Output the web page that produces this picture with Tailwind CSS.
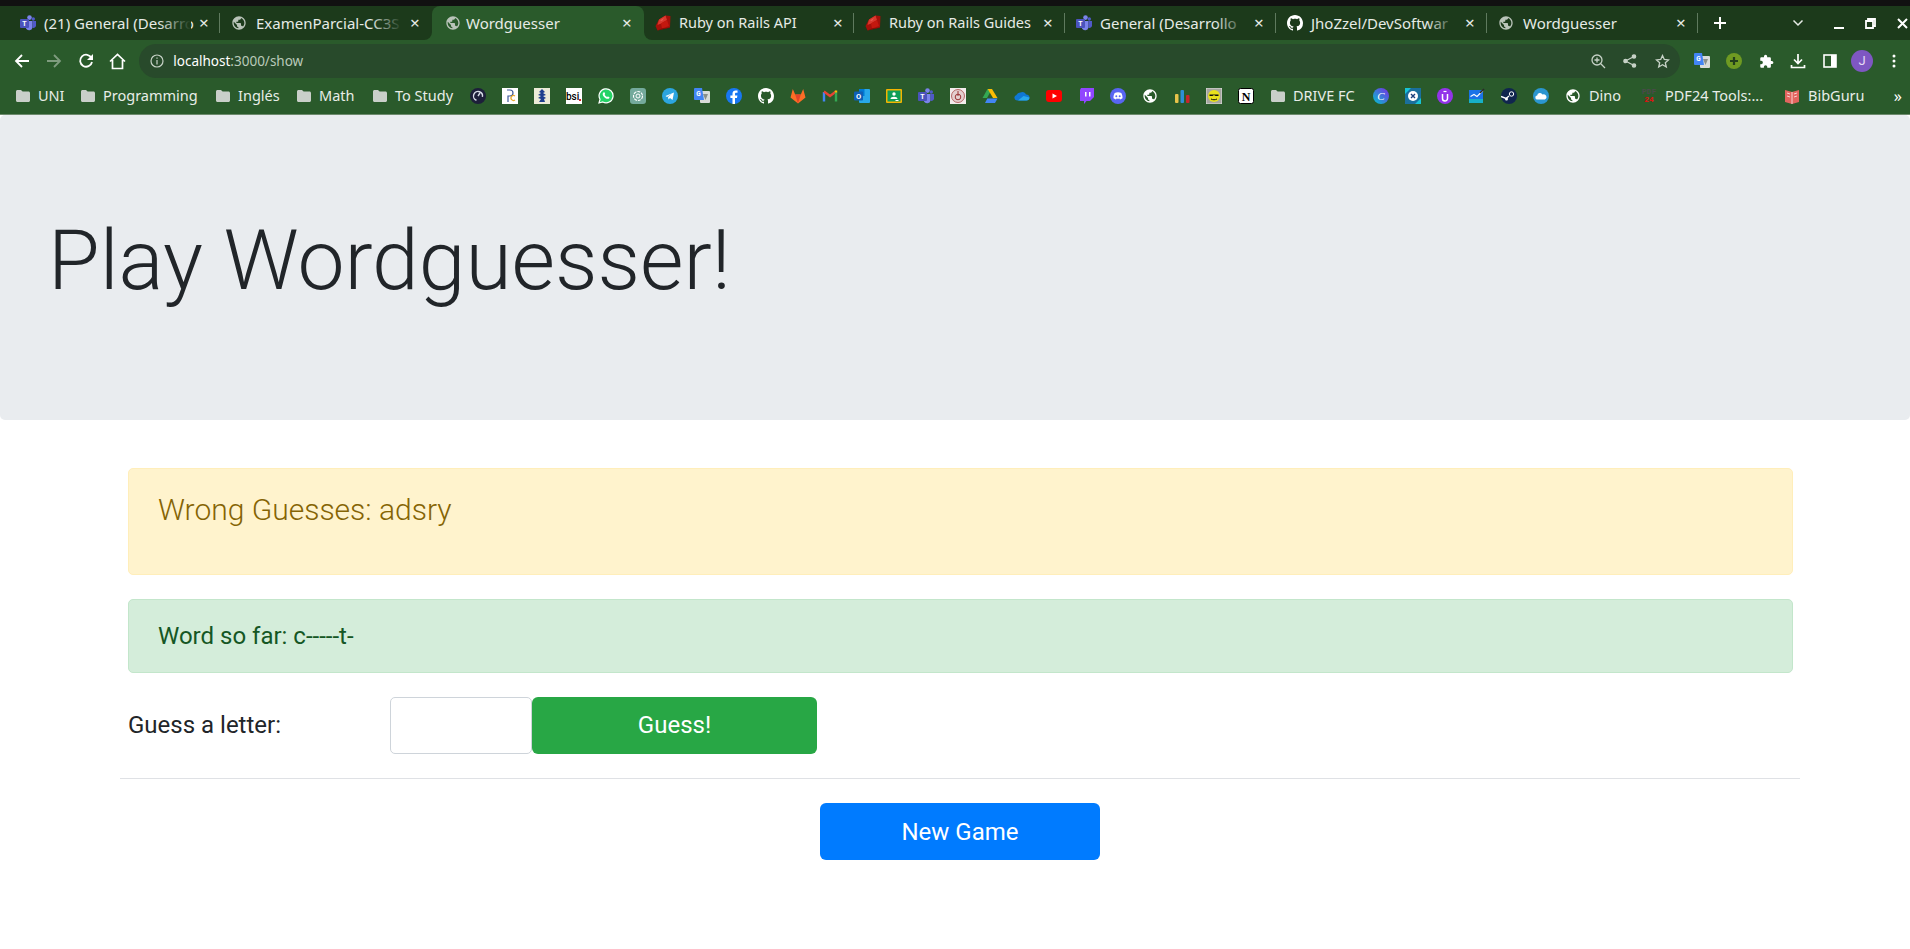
<!DOCTYPE html>
<html lang="en">
<head>
    <meta charset="UTF-8">
    <title>Wordguesser</title>
    <script src="https://cdn.jsdelivr.net/npm/@tailwindcss/browser@4"></script>
</head>
<body class="bg-white font-['Roboto',sans-serif] overflow-hidden h-[949px]">
    <!-- Icon sprites -->
    <svg class="hidden">
        <symbol id="globe" viewBox="0 0 24 24"><path fill="currentColor" d="M12 2C6.48 2 2 6.48 2 12s4.48 10 10 10 10-4.48 10-10S17.52 2 12 2zm-1 17.93c-3.95-.49-7-3.85-7-7.93 0-.62.08-1.21.21-1.79L9 15v1c0 1.1.9 2 2 2v1.93zm6.9-2.54c-.26-.81-1-1.39-1.9-1.39h-1v-3c0-.55-.45-1-1-1H8v-2h2c.55 0 1-.45 1-1V7h2c1.1 0 2-.9 2-2v-.41c2.93 1.19 5 4.06 5 7.41 0 2.08-.8 3.97-2.1 5.39z"/></symbol>
        <symbol id="folder" viewBox="0 0 16 16"><path fill="#c9cfc9" d="M1 3.5C1 2.7 1.7 2 2.5 2H6l1.6 1.6h5.9c.8 0 1.5.7 1.5 1.5v7.4c0 .8-.7 1.5-1.500 1.500h-11C1.700 14 1 13.300 1 12.500z"/></symbol>
        <symbol id="teams" viewBox="0 0 16 16"><circle cx="9.500" cy="2.600" r="2.300" fill="#7b83eb"/><circle cx="13.300" cy="4" r="1.700" fill="#5059c9"/><path fill="#7b83eb" d="M6 6h6.500v6.500a3.500 3.500 0 0 1-6.500 1z"/><path fill="#5059c9" d="M12.500 6H16v4.500a2.500 2.500 0 0 1-3.500 2.200z"/><rect x="0" y="4" width="9" height="9" rx="1" fill="#4b53bc"/><text x="4.500" y="11" font-size="7" font-weight="700" fill="#fff" text-anchor="middle" font-family="Roboto">T</text></symbol>
        <symbol id="ruby" viewBox="0 0 16 16"><path fill="#a5100a" d="M10.500.5L15.500 1l-.5 11.500L2.500 15.500.5 11 4 4.500z"/><path fill="#d9372c" d="M4 4.500L10.500.5 12 5 6 8.500 2.500 10z"/><path fill="#e85a50" d="M5 5.500L9 3 7 6z"/><path fill="#c4180f" d="M6 8.500L12 5l2 6-7 2.500z"/><path fill="#7a0b06" d="M2.500 15.500L7 13.500l8-1z"/></symbol>
        <symbol id="github" viewBox="0 0 16 16"><path fill="#fff" d="M8 0C3.580 0 0 3.580 0 8c0 3.540 2.290 6.530 5.470 7.590.4.070.55-.17.55-.38 0-.19-.01-.82-.01-1.490-2.010.37-2.530-.49-2.690-.94-.09-.23-.48-.94-.82-1.130-.28-.15-.68-.52-.01-.53.63-.01 1.080.58 1.230.82.72 1.210 1.870.87 2.330.66.07-.52.28-.87.51-1.070-1.780-.2-3.640-.89-3.640-3.950 0-.87.31-1.590.82-2.150-.08-.2-.36-1.020.08-2.120 0 0 .67-.21 2.200.82.64-.18 1.320-.27 2-.27.68 0 1.360.09 2 .27 1.530-1.040 2.200-.82 2.200-.82.44 1.100.16 1.920.08 2.120.51.56.82 1.270.82 2.150 0 3.070-1.870 3.750-3.650 3.950.29.25.54.73.54 1.480 0 1.070-.01 1.930-.01 2.200 0 .21.15.46.55.38A8.013 8.013 0 0 0 16 8c0-4.420-3.580-8-8-8z"/></symbol>
        <symbol id="gtranslate" viewBox="0 0 16 16"><rect x="6" y="3" width="10" height="12" rx="1" fill="#d9dcd9"/><path fill="#8a8f8a" d="M9 6h5l-2.500 6z"/><path fill="#4285f4" d="M1 0h7l2 12H1a1 1 0 0 1-1-1V1a1 1 0 0 1 1-1z"/><text x="4.500" y="8" font-size="6.500" font-weight="700" fill="#fff" text-anchor="middle" font-family="Roboto">G</text></symbol>
    </svg>

    <!-- Browser chrome -->
    <div class="bg-[#111111] h-[6px]"></div>
    <div class="bg-[#2a5a2b] h-[34px] flex items-stretch font-['Noto_Sans',sans-serif] text-[15px] text-[#e6ebe6] whitespace-nowrap">
        <div class="flex items-stretch bg-[#1c3a1b] rounded-br-[8px] pl-[9px]">
            <div class="w-[211px] flex items-center pl-[11px] relative">
                <svg class="w-[16px] h-[16px] shrink-0"><use href="#teams"/></svg>
                <span class="ml-[8px]">(21) General (Desarro</span>
                <span class="absolute left-[150px] top-0 bottom-0 w-[32px] bg-linear-to-r from-transparent to-[#1c3a1b]"></span>
                <span class="absolute left-[190px] text-[17px]">×</span>
                <span class="absolute right-0 top-[7px] bottom-[7px] w-px bg-[#5f7a5e]"></span>
            </div>
            <div class="w-[212px] flex items-center pl-[11px] relative">
                <svg class="w-[16px] h-[16px] shrink-0 text-[#b9c3b9]"><use href="#globe"/></svg>
                <span class="ml-[9px]">ExamenParcial-CC3S</span>
                <span class="absolute left-[150px] top-0 bottom-0 w-[32px] bg-linear-to-r from-transparent to-[#1c3a1b]"></span>
                <span class="absolute left-[190px] text-[17px]">×</span>
            </div>
        </div>
        <div class="w-[212px] bg-linear-to-b from-[#1c3a1b] from-50% to-[#2a5a2b] to-50%">
            <div class="h-full bg-[#2a5a2b] rounded-t-[8px] flex items-center pl-[13px] relative">
                <svg class="w-[16px] h-[16px] shrink-0 text-[#b9c3b9]"><use href="#globe"/></svg>
                <span class="ml-[5px]">Wordguesser</span>
                <span class="absolute left-[190px] text-[17px]">×</span>
            </div>
        </div>
        <div class="flex-1 flex items-stretch bg-[#1c3a1b] rounded-bl-[8px]">
            <div class="w-[210px] flex items-center pl-[11px] relative">
                <svg class="w-[16px] h-[16px] shrink-0"><use href="#ruby"/></svg>
                <span class="ml-[8px] text-[14.500px]">Ruby on Rails API</span>
                <span class="absolute left-[189px] text-[17px]">×</span>
                <span class="absolute right-0 top-[7px] bottom-[7px] w-px bg-[#5f7a5e]"></span>
            </div>
            <div class="w-[211px] flex items-center pl-[11px] relative">
                <svg class="w-[16px] h-[16px] shrink-0"><use href="#ruby"/></svg>
                <span class="ml-[8px] text-[14.500px]">Ruby on Rails Guides</span>
                <span class="absolute left-[189px] text-[17px]">×</span>
                <span class="absolute right-0 top-[7px] bottom-[7px] w-px bg-[#5f7a5e]"></span>
            </div>
            <div class="w-[211px] flex items-center pl-[11px] relative">
                <svg class="w-[16px] h-[16px] shrink-0"><use href="#teams"/></svg>
                <span class="ml-[8px]">General (Desarrollo</span>
                <span class="absolute left-[150px] top-0 bottom-0 w-[32px] bg-linear-to-r from-transparent to-[#1c3a1b]"></span>
                <span class="absolute left-[189px] text-[17px]">×</span>
                <span class="absolute right-0 top-[7px] bottom-[7px] w-px bg-[#5f7a5e]"></span>
            </div>
            <div class="w-[211px] flex items-center pl-[11px] relative">
                <svg class="w-[16px] h-[16px] shrink-0"><use href="#github"/></svg>
                <span class="ml-[8px]">JhoZzel/DevSoftwar</span>
                <span class="absolute left-[150px] top-0 bottom-0 w-[32px] bg-linear-to-r from-transparent to-[#1c3a1b]"></span>
                <span class="absolute left-[189px] text-[17px]">×</span>
                <span class="absolute right-0 top-[7px] bottom-[7px] w-px bg-[#5f7a5e]"></span>
            </div>
            <div class="w-[211px] flex items-center pl-[11px] relative">
                <svg class="w-[16px] h-[16px] shrink-0 text-[#b9c3b9]"><use href="#globe"/></svg>
                <span class="ml-[9px]">Wordguesser</span>
                <span class="absolute left-[189px] text-[17px]">×</span>
                <span class="absolute right-0 top-[7px] bottom-[7px] w-px bg-[#5f7a5e]"></span>
            </div>
            <div class="flex-1 flex items-center pl-[15px] pr-[0px]">
                <svg class="w-[14px] h-[14px]" viewBox="0 0 14 14" fill="none" stroke="#fff" stroke-width="2"><path d="M7 1v12M1 7h12"/></svg>
                <svg class="w-[12px] h-[8px] ml-[65px]" viewBox="0 0 12 8" fill="none" stroke="#e6ebe6" stroke-width="1.500"><path d="M1.500 1.500L6 6l4.500-4.500"/></svg>
                <svg class="w-[11px] h-[11px] ml-[30px]" viewBox="0 0 11 11" fill="none" stroke="#fff" stroke-width="2"><path d="M0 10h10"/></svg>
                <svg class="w-[11px] h-[11px] ml-[20px]" viewBox="0 0 11 11" fill="none" stroke="#fff" stroke-width="1.800"><path d="M3 3V1h7v7H8M1 3h7v7H1z"/></svg>
                <svg class="w-[11px] h-[11px] ml-[21px]" viewBox="0 0 11 11" fill="none" stroke="#fff" stroke-width="2"><path d="M1 1l9 9M10 1l-9 9"/></svg>
            </div>
        </div>
    </div>

    <div class="bg-[#2a5a2b] h-[42px] flex items-center pl-[6px] pt-[0px]">
        <div class="w-[32px] flex justify-center"><svg class="w-[16px] h-[16px]" viewBox="0 0 16 16" fill="none" stroke="#fff" stroke-width="1.800"><path d="M15 8H2M8 2L2 8l6 6"/></svg></div>
        <div class="w-[32px] flex justify-center"><svg class="w-[16px] h-[16px]" viewBox="0 0 16 16" fill="none" stroke="#7f9c7f" stroke-width="1.800"><path d="M1 8h13M8 2l6 6-6 6"/></svg></div>
        <div class="w-[32px] flex justify-center"><svg class="w-[16px] h-[16px]" viewBox="0 0 16 16" fill="none" stroke="#fff" stroke-width="1.800"><path d="M13.500 5A6 6 0 1 0 14 9"/><path fill="#fff" stroke="none" d="M15 1v6H9z"/></svg></div>
        <div class="w-[32px] flex justify-center"><svg class="w-[17px] h-[17px]" viewBox="0 0 17 17" fill="none" stroke="#fff" stroke-width="1.700"><path d="M1 8.500L8.500 1.500 16 8.500M3.500 7v8.500h10V7"/></svg></div>
        <div class="bg-[#284a2b] h-[34px] w-[1549px] ml-[6px] rounded-full flex items-center pl-[11px] text-[13.500px] text-[#b9c9b9] font-['Noto_Sans',sans-serif]">
            <svg class="w-[14px] h-[14px]" viewBox="0 0 14 14" fill="none" stroke="#c7d2c7" stroke-width="1.200"><circle cx="7" cy="7" r="6"/><path d="M7 6v4.500M7 3.500v1.200"/></svg>
            <span class="ml-[9px] text-white">localhost</span><span>:3000/show</span>
            <div class="ml-auto flex items-center pr-[2px]">
                <div class="w-[32px] flex justify-center"><svg class="w-[15px] h-[15px]" viewBox="0 0 15 15" fill="none" stroke="#c7d2c7" stroke-width="1.300"><circle cx="6" cy="6" r="5"/><path d="M9.800 9.800L14 14M6 3.500v5M3.500 6h5"/></svg></div>
                <div class="w-[32px] flex justify-center"><svg class="w-[14px] h-[14px]" viewBox="0 0 14 14" fill="#c7d2c7" stroke="#c7d2c7" stroke-width="1.200"><circle cx="11" cy="2.500" r="1.700"/><circle cx="2.500" cy="7" r="1.700"/><circle cx="11" cy="11.500" r="1.700"/><path d="M11 2.500L2.500 7l8.500 4.500" fill="none"/></svg></div>
                <div class="w-[32px] flex justify-center"><svg class="w-[15px] h-[15px]" viewBox="0 0 15 15" fill="none" stroke="#c7d2c7" stroke-width="1.300"><path d="M7.500 1.500l1.800 4 4.200.4-3.200 2.800 1 4.300-3.800-2.300-3.800 2.300 1-4.300L1.500 5.900l4.200-.4z"/></svg></div>
            </div>
        </div>
        <div class="flex items-center ml-[6px]">
            <div class="w-[32px] flex justify-center"><svg class="w-[16px] h-[16px]"><use href="#gtranslate"/></svg></div>
            <div class="w-[32px] flex justify-center"><svg class="w-[16px] h-[16px]" viewBox="0 0 16 16"><circle cx="8" cy="8" r="8" fill="#6f9a22"/><path d="M8 4v8M4 8h8" stroke="#23401c" stroke-width="2.200"/></svg></div>
            <div class="w-[32px] flex justify-center"><svg class="w-[15px] h-[15px]" viewBox="0 0 24 24"><path fill="#fff" d="M20.500 11H19V7c0-1.100-.9-2-2-2h-4V3.500a2.500 2.500 0 0 0-5 0V5H4c-1.100 0-2 .9-2 2v3.800h1.500a2.700 2.700 0 0 1 0 5.400H2V20c0 1.100.9 2 2 2h3.800v-1.500a2.700 2.700 0 0 1 5.400 0V22H17c1.100 0 2-.9 2-2v-4h1.500a2.500 2.500 0 0 0 0-5z"/></svg></div>
            <div class="w-[32px] flex justify-center"><svg class="w-[16px] h-[16px]" viewBox="0 0 16 16" fill="none" stroke="#fff" stroke-width="1.700"><path d="M8 1v9M4 6.500L8 10.500l4-4M1.500 12v2.500h13V12"/></svg></div>
            <div class="w-[32px] flex justify-center"><svg class="w-[14px] h-[14px]" viewBox="0 0 14 14"><rect x="1" y="1" width="12" height="12" fill="none" stroke="#fff" stroke-width="1.600"/><rect x="8" y="1" width="5" height="12" fill="#fff"/></svg></div>
            <div class="w-[32px] flex justify-center"><div class="w-[22px] h-[22px] rounded-full bg-[#7e57c2] text-[#e6dcf5] text-[13px] flex items-center justify-center">J</div></div>
            <div class="w-[32px] flex justify-center"><svg class="w-[4px] h-[14px]" viewBox="0 0 4 14" fill="#fff"><circle cx="2" cy="2" r="1.500"/><circle cx="2" cy="7" r="1.500"/><circle cx="2" cy="12" r="1.500"/></svg></div>
        </div>
    </div>

    <!-- Bookmarks bar -->
    <div class="bg-[#2a5a2b] h-[33px] border-b border-[#6d8a6d] flex items-center pl-[7px] pb-[4px] text-[14.500px] text-[#e8ede8] font-['Noto_Sans',sans-serif] whitespace-nowrap">
        <div class="w-[65px] flex items-center pl-[8px] gap-[7px]"><svg class="w-[16px] h-[16px]"><use href="#folder"/></svg>UNI</div>
        <div class="w-[135px] flex items-center pl-[8px] gap-[7px]"><svg class="w-[16px] h-[16px]"><use href="#folder"/></svg>Programming</div>
        <div class="w-[81px] flex items-center pl-[8px] gap-[7px]"><svg class="w-[16px] h-[16px]"><use href="#folder"/></svg>Inglés</div>
        <div class="w-[76px] flex items-center pl-[8px] gap-[7px]"><svg class="w-[16px] h-[16px]"><use href="#folder"/></svg>Math</div>
        <div class="w-[98px] flex items-center pl-[8px] gap-[7px]"><svg class="w-[16px] h-[16px]"><use href="#folder"/></svg>To Study</div>
        <!-- favicons -->
        <div class="w-[32px] flex justify-center"><svg class="w-[16px] h-[16px]" viewBox="0 0 16 16"><circle cx="8" cy="8" r="8" fill="#1d1f3a"/><circle cx="8" cy="8" r="4.500" fill="none" stroke="#d8dce8" stroke-width="1.400" stroke-dasharray="20 8" transform="rotate(110 8 8)"/><path d="M8 8l2-3" stroke="#d8dce8" stroke-width="1.400"/></svg></div>
        <div class="w-[32px] flex justify-center"><svg class="w-[16px] h-[16px]" viewBox="0 0 16 16"><rect width="16" height="16" fill="#fff"/><path d="M5 2h3a3 3 0 0 1 0 6H6v6" fill="none" stroke="#3e5a9c" stroke-width="1.200"/><path d="M13 8a2.500 2.500 0 1 0 0 4" fill="none" stroke="#e8a92e" stroke-width="1.200"/></svg></div>
        <div class="w-[32px] flex justify-center"><svg class="w-[16px] h-[16px]" viewBox="0 0 16 16"><rect width="16" height="16" fill="#ecebd8"/><path d="M8 1l3 3-2 1 3 2-3 1 3 2-2 1 1 3H5l2-3-3-1 3-2-3-1 3-2-2-1z" fill="#1f3f8f"/></svg></div>
        <div class="w-[32px] flex justify-center"><svg class="w-[16px] h-[16px]" viewBox="0 0 16 16"><rect width="16" height="16" fill="#fff"/><text x="0" y="12" font-size="10" font-weight="500" fill="#000" font-family="Roboto">bsi</text><rect x="13" y="11" width="2" height="2" fill="#d8232a"/></svg></div>
        <div class="w-[32px] flex justify-center"><svg class="w-[16px] h-[16px]" viewBox="0 0 16 16"><path fill="#25d366" stroke="#fff" stroke-width="1.200" d="M1 15l1-3.700A7 7 0 1 1 4.800 14z"/><path fill="#fff" d="M5.500 4.500c.5-.4 1-.3 1.200.2l.5 1.200-.6.9c.5 1 1.300 1.800 2.400 2.300l.9-.7 1.300.6c.4.3.4.8 0 1.300-.9.900-2.400.7-4-.4-1.500-1-2.700-2.800-2.500-4 .1-.8.400-1.300.8-1.400z"/></svg></div>
        <div class="w-[32px] flex justify-center"><svg class="w-[16px] h-[16px]" viewBox="0 0 16 16"><rect width="16" height="16" rx="3" fill="#74aa9c"/><circle cx="8" cy="8" r="4.500" fill="none" stroke="#fff" stroke-width="1.100" stroke-dasharray="3 1"/><circle cx="8" cy="8" r="2" fill="none" stroke="#fff" stroke-width="1"/></svg></div>
        <div class="w-[32px] flex justify-center"><svg class="w-[16px] h-[16px]" viewBox="0 0 16 16"><circle cx="8" cy="8" r="8" fill="#2ca5e0"/><path fill="#fff" d="M3.500 8L12 4.500 10.500 12 8 10l-1.500 1.500L6 9l4-3.500L5 9z"/></svg></div>
        <div class="w-[32px] flex justify-center"><svg class="w-[16px] h-[16px]"><use href="#gtranslate"/></svg></div>
        <div class="w-[32px] flex justify-center"><svg class="w-[16px] h-[16px]" viewBox="0 0 16 16"><circle cx="8" cy="8" r="8" fill="#1877f2"/><path fill="#fff" d="M9 16v-6h2l.4-2.500H9V6c0-.8.3-1.200 1.300-1.200h1.200V2.600S10.500 2.500 9.700 2.500C7.800 2.500 6.500 3.600 6.500 5.700v1.800H4.400V10h2.100v6z"/></svg></div>
        <div class="w-[32px] flex justify-center"><svg class="w-[16px] h-[16px]"><use href="#github"/></svg></div>
        <div class="w-[32px] flex justify-center"><svg class="w-[16px] h-[16px]" viewBox="0 0 16 16"><path fill="#fc6d26" d="M8 15.500L.5 9.500 2.800 1l2.400 5.500h5.600L13.200 1l2.300 8.500z"/><path fill="#e24329" d="M8 15.500L5.200 6.500h5.600z"/></svg></div>
        <div class="w-[32px] flex justify-center"><svg class="w-[16px] h-[16px]" viewBox="0 0 16 16"><path d="M2 13.500V4" stroke="#4285f4" stroke-width="2.400" fill="none"/><path d="M2 3.500l6 4.500 6-4.500" stroke="#ea4335" stroke-width="2.200" fill="none"/><path d="M14 13.500V4" stroke="#34a853" stroke-width="2.400" fill="none"/><path d="M14 2.500l0 2" stroke="#fbbc04" stroke-width="2.400"/></svg></div>
        <div class="w-[32px] flex justify-center"><svg class="w-[16px] h-[16px]" viewBox="0 0 16 16"><rect x="5" y="1" width="11" height="14" rx="1" fill="#28a8ea"/><rect x="5" y="1" width="5.500" height="7" fill="#0078d4"/><rect x="0" y="3.500" width="9" height="9" rx="1" fill="#0f5fb5"/><text x="4.500" y="10.800" font-size="7.500" font-weight="700" fill="#fff" text-anchor="middle" font-family="Roboto">O</text></svg></div>
        <div class="w-[32px] flex justify-center"><svg class="w-[16px] h-[16px]" viewBox="0 0 16 16"><rect width="16" height="14" y="1" rx="1" fill="#f4b400"/><rect x="1.500" y="2.500" width="13" height="11" fill="#0f9d58"/><circle cx="8" cy="6" r="1.700" fill="#fff"/><path fill="#fff" d="M4.500 11c0-3 7-3 7 0zM9.500 12h3v1h-3z"/></svg></div>
        <div class="w-[32px] flex justify-center"><svg class="w-[16px] h-[16px]"><use href="#teams"/></svg></div>
        <div class="w-[32px] flex justify-center"><svg class="w-[16px] h-[16px]" viewBox="0 0 16 16"><rect width="16" height="16" fill="#f3ecec"/><circle cx="8" cy="8" r="6.500" fill="#e4cfcf" stroke="#a84a4a" stroke-width=".8"/><circle cx="8" cy="9" r="2.800" fill="none" stroke="#9a3434" stroke-width="1"/><path d="M8 3v5" stroke="#9a3434"/></svg></div>
        <div class="w-[32px] flex justify-center"><svg class="w-[16px] h-[16px]" viewBox="0 0 16 16"><path fill="#34a853" d="M5.500 1h4.500L5 10H.5z"/><path fill="#fbbc04" d="M10 1l5.500 9H11L5.700 1z"/><path fill="#4285f4" d="M3 15l2.300-4.500h10.200L13 15z"/></svg></div>
        <div class="w-[32px] flex justify-center"><svg class="w-[16px] h-[16px]" viewBox="0 0 16 16"><path fill="#0f78d4" d="M6.500 4.500a4 4 0 0 1 5.500 2 3 3 0 0 1 3.500 3c0 2-1.500 3-3 3H3a2.800 2.800 0 0 1-.5-5.500 4 4 0 0 1 4-2.500z"/><path fill="#28a8ea" d="M4 12.500h8.500c1.500 0 3-1 3-3L9.500 8z"/></svg></div>
        <div class="w-[32px] flex justify-center"><svg class="w-[16px] h-[16px]" viewBox="0 0 16 16"><rect y="2" width="16" height="12" rx="3" fill="#f00"/><path fill="#fff" d="M6.500 5.500L11 8l-4.500 2.500z"/></svg></div>
        <div class="w-[32px] flex justify-center"><svg class="w-[16px] h-[16px]" viewBox="0 0 16 16"><path fill="#9146ff" d="M3 0h13v9l-4 4H8.500L6 16v-3H2V2z"/><path fill="#fff" d="M7 4h1.500v4.500H7zM11 4h1.500v4.500H11z"/></svg></div>
        <div class="w-[32px] flex justify-center"><svg class="w-[16px] h-[16px]" viewBox="0 0 16 16"><circle cx="8" cy="8" r="8" fill="#5865f2"/><path fill="#fff" d="M4.700 5c2-1 4.600-1 6.600 0 .9 1.500 1.300 3.200 1.200 5.200-1 .7-1.800 1-2.500 1.200l-.6-1c-1 .3-1.800.3-2.800 0l-.6 1c-.7-.2-1.500-.5-2.500-1.200C3.400 8.200 3.800 6.500 4.700 5z"/><circle cx="6.300" cy="8.200" r="1" fill="#5865f2"/><circle cx="9.700" cy="8.200" r="1" fill="#5865f2"/></svg></div>
        <div class="w-[32px] flex justify-center"><svg class="w-[16px] h-[16px] text-white"><use href="#globe"/></svg></div>
        <div class="w-[32px] flex justify-center"><svg class="w-[16px] h-[16px]" viewBox="0 0 16 16"><rect x="1" y="6" width="3.500" height="9" rx="1" fill="#e8c34a"/><rect x="6.500" y="2" width="3.500" height="13" rx="1" fill="#2c8fd6"/><rect x="12" y="7" width="3.500" height="8" rx="1" fill="#c8242c"/></svg></div>
        <div class="w-[32px] flex justify-center"><svg class="w-[16px] h-[16px]" viewBox="0 0 16 16"><rect width="16" height="16" fill="#a6a6a0" stroke="#e0e0e0"/><circle cx="8" cy="8" r="6" fill="#e9e21c"/><path d="M3.500 6.500h9v1.500h-3L8 7 6.500 8h-3z" fill="#111"/><path d="M5 11c2 1 4 1 6 0" stroke="#111" fill="none"/></svg></div>
        <div class="w-[32px] flex justify-center"><svg class="w-[16px] h-[16px]" viewBox="0 0 16 16"><rect x=".5" y=".5" width="15" height="15" rx="2" fill="#fff" stroke="#000"/><text x="8" y="13" font-size="12" font-weight="700" fill="#000" text-anchor="middle" font-family="Liberation Serif">N</text></svg></div>
        <div class="w-[103px] flex items-center pl-[8px] gap-[7px]"><svg class="w-[16px] h-[16px]"><use href="#folder"/></svg>DRIVE FC</div>
        <div class="w-[32px] flex justify-center"><svg class="w-[16px] h-[16px]" viewBox="0 0 16 16"><defs><linearGradient id="canva" x1="0" y1="1" x2="1" y2="0"><stop offset="0" stop-color="#00c4cc"/><stop offset="1" stop-color="#7d2ae8"/></linearGradient></defs><circle cx="8" cy="8" r="8" fill="url(#canva)"/><text x="8" y="12" font-size="11" font-style="italic" fill="#fff" text-anchor="middle" font-family="Liberation Serif">C</text></svg></div>
        <div class="w-[32px] flex justify-center"><svg class="w-[16px] h-[16px]" viewBox="0 0 16 16"><rect width="16" height="16" fill="#1a6f9c"/><path d="M0 0h6l-6 6zM16 16h-6l6-6z" fill="#17c3d6"/><circle cx="8" cy="8" r="5" fill="#fff"/><path d="M6 6l4 4M10 6l-4 4" stroke="#1a3f7a" stroke-width="1.400"/></svg></div>
        <div class="w-[32px] flex justify-center"><svg class="w-[16px] h-[16px]" viewBox="0 0 16 16"><circle cx="8" cy="8" r="8" fill="#9333ea"/><path d="M5.500 6v4.500a2.500 2.500 0 0 0 5 0V6" fill="none" stroke="#fff" stroke-width="1.500"/><path d="M6.500 3.500h3" stroke="#fff" stroke-width="1.200"/></svg></div>
        <div class="w-[32px] flex justify-center"><svg class="w-[16px] h-[16px]" viewBox="0 0 16 16"><rect y="2" width="14" height="13" fill="#1a73e8"/><rect y="11" width="14" height="4" fill="#17b0c8"/><path d="M1.500 8.500L5 6.500l3 2 6-6" fill="none" stroke="#fff" stroke-width="1.100"/><path d="M11 5l4-4" stroke="#2a2a2a" stroke-width="1.600"/></svg></div>
        <div class="w-[32px] flex justify-center"><svg class="w-[16px] h-[16px]" viewBox="0 0 16 16"><circle cx="8" cy="8" r="8" fill="#10254e"/><circle cx="10.500" cy="6" r="2.200" fill="none" stroke="#fff" stroke-width="1"/><path d="M0 8.500l5 2 3-2.500" stroke="#fff" stroke-width="1.400" fill="none"/><circle cx="5.500" cy="11" r="1.500" fill="#fff"/></svg></div>
        <div class="w-[32px] flex justify-center"><svg class="w-[16px] h-[16px]" viewBox="0 0 16 16"><circle cx="8" cy="8" r="8" fill="#2b96d0"/><path fill="#fff" d="M4.500 11.500a2 2 0 0 1-.3-4 2.800 2.800 0 0 1 5.300-1 2.500 2.500 0 0 1 2.300 5z"/></svg></div>
        <div class="w-[76px] flex items-center pl-[8px] gap-[8px]"><svg class="w-[16px] h-[16px] text-white"><use href="#globe"/></svg>Dino</div>
        <div class="w-[143px] flex items-center pl-[8px] gap-[8px]">
            <div class="w-[16px] h-[16px] flex flex-col items-center justify-center font-['Liberation_Mono',monospace] text-[8px] leading-[8px] font-bold"><span class="text-[#4a4a4a]">PDF</span><span class="text-[#e01010]">24</span></div>
            <span>PDF24 Tools:...</span>
        </div>
        <div class="flex items-center pl-[8px] gap-[8px]"><svg class="w-[16px] h-[16px]" viewBox="0 0 16 16"><path fill="#e2655f" d="M1 2l7 2 7-2v12l-7 2-7-2z"/><path d="M8 4v12M3 5l3 1M3 8l3 1M13 5l-3 1M13 8l-3 1" stroke="#f7d4d2"/></svg>BibGuru</div>
        <div class="ml-auto pr-[8px] text-[16px] text-white">»</div>
    </div>

    <!-- Page -->
    <div class="bg-[#e9ecef] h-[305px] rounded-[5px] pl-[48px] pt-[96px]">
        <h1 class="text-[84px] leading-[1.2] font-light text-[#212529]">Play Wordguesser!</h1>
    </div>
    <div class="px-[128px] pt-[48px]">
        <div class="w-[1665px] h-[107px] bg-[#fff3cd] border border-[#ffeeba] rounded-[5px] text-[#856404] text-[30px] font-light px-[29px] py-[18px]">Wrong Guesses: adsry</div>
        <div class="w-[1665px] h-[74px] mt-[24px] bg-[#d4edda] border border-[#c3e6cb] rounded-[5px] text-[#155724] text-[24px] flex items-center px-[29px]">Word so far: c-----t-</div>
        <div class="flex items-center mt-[24px] h-[57px] text-[24px] text-[#212529]">
            <label class="w-[262px] pb-[1px]">Guess a letter:</label>
            <input class="w-[142px] h-[57px] border border-[#ced4da] rounded-[5px]">
            <button class="w-[285px] h-[57px] pb-[1px] bg-[#28a745] text-white rounded-[6px]">Guess!</button>
        </div>
    </div>
    <hr class="ml-[120px] w-[1680px] mt-[24px] border-[#dfe1e5]">
    <div class="flex justify-center pl-[10px] mt-[24px]">
        <button class="w-[280px] h-[57px] bg-[#007bff] text-white rounded-[6px] text-[24px]">New Game</button>
    </div>
</body>
</html>
